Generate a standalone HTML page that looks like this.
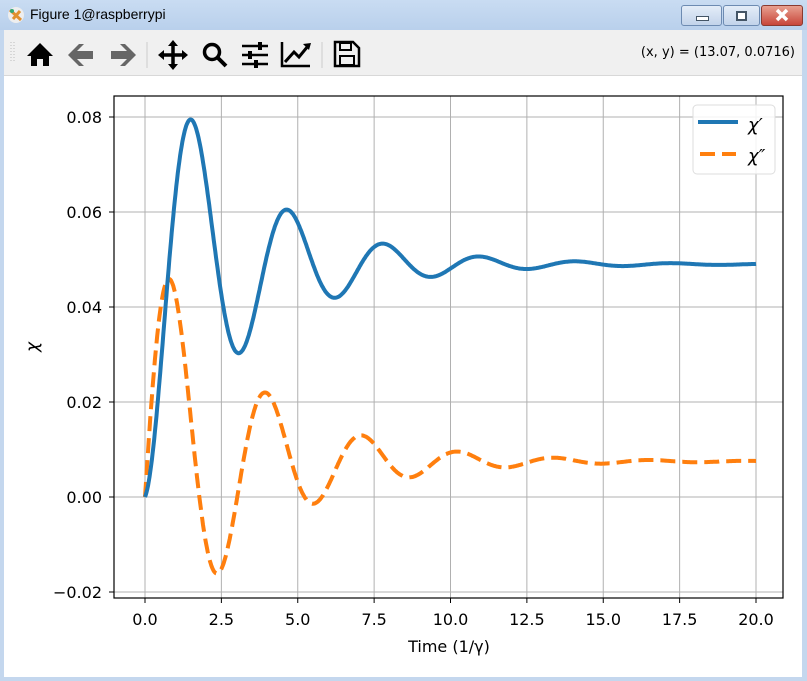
<!DOCTYPE html>
<html><head><meta charset="utf-8"><style>
body{margin:0;width:807px;height:681px;overflow:hidden;background:#c4d7ee;font-family:"DejaVu Sans","Liberation Sans",sans-serif;position:relative}
.title{position:absolute;left:0;top:0;width:807px;height:30px;background:linear-gradient(#c9dcf2,#b9d0ec)}
.title span{position:absolute;left:30px;top:6px;font-size:14px;color:#000;font-family:"Liberation Sans",sans-serif}
.tb{position:absolute;left:4px;top:30px;width:798px;height:45px;background:#f0f0f0;border-bottom:1px solid #d8d8d8}
.plot{position:absolute;left:4px;top:76px;width:798px;height:601px;background:#fff}
.btn{position:absolute;top:5px;height:19px;border:1px solid #6d8bb2;border-radius:3px}
</style></head><body>
<div class="title">
<svg style="position:absolute;left:7px;top:6px" width="18" height="18"><circle cx="9" cy="9" r="8" fill="#eee"/><path d="M3 4 L14 14 M6 13 L13 5" stroke="#e09030" stroke-width="3"/><circle cx="5" cy="5" r="2" fill="#3a7"/></svg>
<span>Figure 1@raspberrypi</span>
<div class="btn" style="left:681px;width:39px;background:linear-gradient(#e4edf8,#c2d3ea)"><div style="position:absolute;left:14px;top:10px;width:11px;height:3px;background:#fff;border:1px solid #456"></div></div>
<div class="btn" style="left:723px;width:35px;background:linear-gradient(#e4edf8,#c2d3ea)"><div style="position:absolute;left:12px;top:5px;width:7px;height:6px;border:2px solid #456;background:#fff"></div></div>
<div class="btn" style="left:761px;width:40px;border-color:#8a3a30;background:linear-gradient(#e8a090,#c8463a)"><svg width="40" height="19" style="position:absolute;left:0;top:0"><path d="M15 4 L25 14 M25 4 L15 14" stroke="#fff" stroke-width="3.5"/></svg></div>
</div>
<div class="tb">
<svg width="420" height="45" style="position:absolute;left:0;top:0">
<g fill="none" stroke="#bbb" stroke-dasharray="1 2"><line x1="7" y1="12" x2="7" y2="32"/><line x1="10" y1="12" x2="10" y2="32"/></g>
<path d="M23 26 L36 13 L49 26 L45 26 L45 36 L39 36 L39 29 L33 29 L33 36 L27 36 L27 26Z" fill="#000"/>
<path d="M64 25 L75 14 L80 14 L73 21 L89 21 L89 29 L73 29 L80 36 L75 36Z" fill="#666"/>
<path d="M132 25 L121 14 L116 14 L123 21 L107 21 L107 29 L123 29 L116 36 L121 36Z" fill="#666"/>
<line x1="143" y1="12" x2="143" y2="38" stroke="#ccc"/>
<g stroke="#000" stroke-width="3.5" fill="#000"><line x1="169" y1="14" x2="169" y2="37"/><line x1="157" y1="25" x2="181" y2="25"/></g>
<path d="M169 10 L174 16 L164 16Z M169 40 L174 34 L164 34Z M154 25 L160 20 L160 30Z M184 25 L178 20 L178 30Z" fill="#000"/>
<circle cx="208" cy="22" r="7.5" fill="none" stroke="#000" stroke-width="3.5"/><line x1="214" y1="28" x2="222" y2="36" stroke="#000" stroke-width="4"/>
<g stroke="#000" stroke-width="2.5"><line x1="238" y1="16" x2="264" y2="16"/><line x1="238" y1="25" x2="264" y2="25"/><line x1="238" y1="34" x2="264" y2="34"/></g>
<g fill="#000"><rect x="254" y="12" width="4" height="8"/><rect x="244" y="21" width="4" height="8"/><rect x="250" y="30" width="4" height="8"/></g>
<path d="M278 12 L278 36 L306 36" fill="none" stroke="#000" stroke-width="2.5"/>
<path d="M281 32 L290 22 L295 27 L304 16" fill="none" stroke="#000" stroke-width="3"/><path d="M299 14 L307 13 L305 20Z" fill="#000"/>
<line x1="318" y1="12" x2="318" y2="38" stroke="#ccc"/>
<path d="M331 12 L349 12 L355 18 L355 36 L331 36Z" fill="none" stroke="#000" stroke-width="2.5"/>
<rect x="336" y="13" width="11" height="7" fill="none" stroke="#000" stroke-width="2"/><rect x="336" y="26" width="14" height="9" fill="none" stroke="#000" stroke-width="2"/>
</svg>
<span style="position:absolute;right:7px;top:15px;font-size:13px">(x, y) = (13.07, 0.0716)</span>
</div>
<div class="plot">
<svg id="s" width="798" height="601" style="position:absolute;left:-4px;top:-76px;overflow:visible" font-family="DejaVu Sans, Liberation Sans, sans-serif" font-size="16"></svg>
</div>
<script>
var X=t=>145+t*30.55, Y=v=>497-v*4750;
var s='';
for(var k=0;k<=8;k++){var x=X(k*2.5);s+='<line x1="'+x+'" y1="96" x2="'+x+'" y2="598" stroke="#b0b0b0"/><line x1="'+x+'" y1="598" x2="'+x+'" y2="603" stroke="#000"/><text x="'+x+'" y="625" text-anchor="middle">'+(k*2.5).toFixed(1)+'</text>';}
var yl=['\u22120.02','0.00','0.02','0.04','0.06','0.08'];
for(var k=0;k<6;k++){var v=-0.02+k*0.02,y=Y(v);s+='<line x1="114" y1="'+y+'" x2="783" y2="'+y+'" stroke="#b0b0b0"/><line x1="109" y1="'+y+'" x2="114" y2="'+y+'" stroke="#000"/><text x="102" y="'+(y+6)+'" text-anchor="end">'+yl[k]+'</text>';}
var a='',b='',g=0.31;
for(var i=0;i<=800;i++){var t=i*20/800,e=Math.exp(-g*t);
var f1=0.049*(1-e*Math.cos(2*t)), f2=0.0075*(1-e*Math.cos(2*t))+0.049*e*Math.sin(2*t);
a+=(i?'L':'M')+X(t).toFixed(1)+' '+Y(f1).toFixed(1);b+=(i?'L':'M')+X(t).toFixed(1)+' '+Y(f2).toFixed(1);}
s+='<path d="'+b+'" fill="none" stroke="#ff7f0e" stroke-width="4" stroke-dasharray="15 7"/>';
s+='<path d="'+a+'" fill="none" stroke="#1f77b4" stroke-width="4"/>';
s+='<rect x="114" y="96" width="669" height="502" fill="none" stroke="#000" stroke-width="1.2"/>';
s+='<rect x="693" y="105" width="82" height="69" rx="4" fill="#fff" fill-opacity="0.85" stroke="#ddd"/>';
s+='<line x1="698" y1="122" x2="738" y2="122" stroke="#1f77b4" stroke-width="4"/><text x="748" y="131" font-style="italic" font-size="18">χ′</text>';
s+='<line x1="700" y1="154" x2="736" y2="154" stroke="#ff7f0e" stroke-width="4" stroke-dasharray="15 7"/><text x="748" y="162" font-style="italic" font-size="18">χ″</text>';
s+='<text x="449" y="652" text-anchor="middle">Time (1/γ)</text>';
s+='<text transform="translate(38 347) rotate(-90)" text-anchor="middle" font-style="italic" font-size="17">χ</text>';
document.getElementById('s').innerHTML=s;
</script>
</body></html>
